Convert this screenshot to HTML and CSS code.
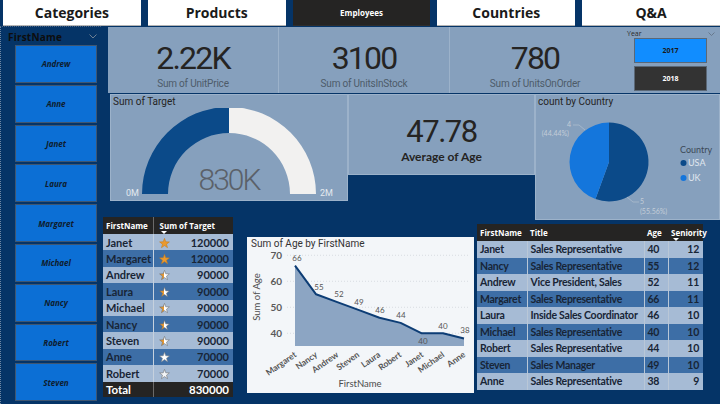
FILE: index.html
```html
<!DOCTYPE html>
<html>
<head>
<meta charset="utf-8">
<link rel="stylesheet" href="styles.css">
</head>
<body>
<svg class="defs" width="0" height="0">
  <defs>
    <linearGradient id="half" x1="0" x2="1" y1="0" y2="0">
      <stop offset="0.5" stop-color="#eb9a2e"/>
      <stop offset="0.5" stop-color="#ffffff"/>
    </linearGradient>
    <symbol id="star" viewBox="0 0 12 12">
      <polygon points="6,0.4 7.35,4.14 11.33,4.27 8.19,6.71 9.29,10.53 6,8.3 2.71,10.53 3.81,6.71 0.67,4.27 4.65,4.14"/>
    </symbol>
  </defs>
</svg>

<nav class="tabs">
  <div class="tab">Categories</div>
  <div class="tab">Products</div>
  <div class="tab active">Employees</div>
  <div class="tab">Countries</div>
  <div class="tab">Q&amp;A</div>
</nav>

<main class="canvas">
  <section class="slicer">
    <div class="slicer-head">
      <span>FirstName</span>
      <svg width="8" height="5" viewBox="0 0 8 5"><path d="M0.5 0.5 L4 4 L7.5 0.5" fill="none" stroke="#6d7f93" stroke-width="1"/></svg>
    </div>
    <div class="slicer-list">
      <div class="sbtn">Andrew</div>
      <div class="sbtn">Anne</div>
      <div class="sbtn">Janet</div>
      <div class="sbtn">Laura</div>
      <div class="sbtn">Margaret</div>
      <div class="sbtn">Michael</div>
      <div class="sbtn">Nancy</div>
      <div class="sbtn">Robert</div>
      <div class="sbtn">Steven</div>
    </div>
  </section>

  <section class="kpis">
    <div class="kpi"><div class="kpi-val">2.22K</div><div class="kpi-lbl">Sum of UnitPrice</div></div>
    <div class="kpi"><div class="kpi-val">3100</div><div class="kpi-lbl">Sum of UnitsInStock</div></div>
    <div class="kpi"><div class="kpi-val">780</div><div class="kpi-lbl">Sum of UnitsOnOrder</div></div>
    <div class="year">
      <div class="year-head">
        <span>Year</span>
        <svg width="7" height="4" viewBox="0 0 7 4"><path d="M0.5 0.5 L3.5 3.5 L6.5 0.5" fill="none" stroke="#5f6f80" stroke-width="0.8"/></svg>
      </div>
      <div class="yr on">2017</div>
      <div class="yr off">2018</div>
    </div>
  </section>

  <section class="gauge card">
    <div class="card-title">Sum of Target</div>
    <svg class="gauge-svg" width="236" height="93" viewBox="0 0 236 93">
      <path d="M31,86 A87,87 0 0 1 118,-1 L118,25 A61,61 0 0 0 57,86 Z" fill="#0b4a89"/>
      <path d="M118,-1 A87,87 0 0 1 205,86 L179,86 A61,61 0 0 0 118,25 Z" fill="#f2f1f0"/>
      <text x="118" y="82" class="g-val" text-anchor="middle">830K</text>
      <text x="15" y="88" class="g-min">0M</text>
      <text x="209" y="88" class="g-min">2M</text>
    </svg>
  </section>

  <section class="age card">
    <div class="age-val">47.78</div>
    <div class="age-lbl">Average of Age</div>
  </section>

  <section class="pie card">
    <div class="card-title">count by Country</div>
    <svg class="pie-svg" width="184" height="112" viewBox="0 0 184 112">
      <path d="M73,54 L73,14.5 A39.5,39.5 0 1 1 59.49,91.12 Z" fill="#0b4a89"/>
      <path d="M73,54 L59.49,91.12 A39.5,39.5 0 0 1 73,14.5 Z" fill="#1476dc"/>
      <polyline points="37,17 43,17 49,22" fill="none" stroke="#b9c6d4" stroke-width="0.6"/>
      <text x="35" y="19" class="p-lbl" text-anchor="end">4</text>
      <text x="33" y="28" class="p-lbl" text-anchor="end">(44.44%)</text>
      <polyline points="91,89 97,94 103,94" fill="none" stroke="#b9c6d4" stroke-width="0.6"/>
      <text x="104" y="96" class="p-lbl">5</text>
      <text x="104" y="106" class="p-lbl">(55.56%)</text>
      <text x="144" y="45" class="lg-title">Country</text>
      <circle cx="147.5" cy="55" r="3" fill="#0b4a89"/>
      <text x="152" y="58" class="lg-item">USA</text>
      <circle cx="147.5" cy="70" r="3" fill="#1476dc"/>
      <text x="152" y="73" class="lg-item">UK</text>
    </svg>
  </section>

  <section class="target">
    <table class="tt">
      <thead>
        <tr><th class="c-name">FirstName</th><th class="c-sum">Sum of Target<span class="sort"></span></th></tr>
      </thead>
      <tbody>
        <tr class="lt"><td>Janet</td><td class="num"><svg class="st" viewBox="0 0 12 12"><use href="#star" fill="#eb9a2e" stroke="#c77a1a" stroke-width="0.6"/></svg>120000</td></tr>
        <tr class="dk"><td>Margaret</td><td class="num"><svg class="st" viewBox="0 0 12 12"><use href="#star" fill="#eb9a2e" stroke="#c77a1a" stroke-width="0.6"/></svg>120000</td></tr>
        <tr class="lt"><td>Andrew</td><td class="num"><svg class="st" viewBox="0 0 12 12"><use href="#star" fill="url(#half)" stroke="#6b6b6b" stroke-width="0.6"/></svg>90000</td></tr>
        <tr class="dk"><td>Laura</td><td class="num"><svg class="st" viewBox="0 0 12 12"><use href="#star" fill="url(#half)" stroke="#6b6b6b" stroke-width="0.6"/></svg>90000</td></tr>
        <tr class="lt"><td>Michael</td><td class="num"><svg class="st" viewBox="0 0 12 12"><use href="#star" fill="url(#half)" stroke="#6b6b6b" stroke-width="0.6"/></svg>90000</td></tr>
        <tr class="dk"><td>Nancy</td><td class="num"><svg class="st" viewBox="0 0 12 12"><use href="#star" fill="url(#half)" stroke="#6b6b6b" stroke-width="0.6"/></svg>90000</td></tr>
        <tr class="lt"><td>Steven</td><td class="num"><svg class="st" viewBox="0 0 12 12"><use href="#star" fill="url(#half)" stroke="#6b6b6b" stroke-width="0.6"/></svg>90000</td></tr>
        <tr class="dk"><td>Anne</td><td class="num"><svg class="st" viewBox="0 0 12 12"><use href="#star" fill="#ffffff" stroke="#8a8a8a" stroke-width="0.6"/></svg>70000</td></tr>
        <tr class="lt"><td>Robert</td><td class="num"><svg class="st" viewBox="0 0 12 12"><use href="#star" fill="#f4f6f8" stroke="#6b6b6b" stroke-width="0.6"/></svg>70000</td></tr>
      </tbody>
      <tfoot>
        <tr><td>Total</td><td class="num">830000</td></tr>
      </tfoot>
    </table>
  </section>

  <section class="chart">
    <svg width="227" height="156" viewBox="0 0 227 156">
      <text x="4" y="9.5" class="ch-title">Sum of Age by FirstName</text>
      <g class="grid">
        <line x1="40" y1="18.3" x2="222" y2="18.3"/>
        <line x1="40" y1="44.3" x2="222" y2="44.3"/>
        <line x1="40" y1="70.3" x2="222" y2="70.3"/>
        <line x1="40" y1="96.3" x2="222" y2="96.3"/>
      </g>
      <g class="ax">
        <text x="35" y="22" text-anchor="end">70</text>
        <text x="35" y="48" text-anchor="end">60</text>
        <text x="35" y="74" text-anchor="end">50</text>
        <text x="35" y="100" text-anchor="end">40</text>
      </g>
      <text class="ax-title" transform="translate(13,60) rotate(-90)" text-anchor="middle">Sum of Age</text>
      <polygon points="48,28.7 69.1,57.3 90.3,65.1 111.4,72.9 132.5,80.7 153.6,85.9 174.8,96.3 195.9,96.3 217,101.5 217,109 48,109" fill="#8ca5c3"/>
      <polyline points="48,28.7 69.1,57.3 90.3,65.1 111.4,72.9 132.5,80.7 153.6,85.9 174.8,96.3 195.9,96.3 217,101.5" fill="none" stroke="#0d3d75" stroke-width="2" stroke-linejoin="round"/>
      <g class="dl">
        <text x="50" y="24" text-anchor="middle">66</text>
        <text x="72" y="53" text-anchor="middle">55</text>
        <text x="92" y="60" text-anchor="middle">52</text>
        <text x="112" y="68" text-anchor="middle">49</text>
        <text x="133" y="76" text-anchor="middle">46</text>
        <text x="154" y="81" text-anchor="middle">44</text>
        <text x="176" y="107" text-anchor="middle">40</text>
        <text x="196" y="92" text-anchor="middle">40</text>
        <text x="218" y="96" text-anchor="middle">38</text>
      </g>
      <g class="xl">
        <text transform="translate(50,119) rotate(-35)" text-anchor="end">Margaret</text>
        <text transform="translate(71,119) rotate(-35)" text-anchor="end">Nancy</text>
        <text transform="translate(92,119) rotate(-35)" text-anchor="end">Andrew</text>
        <text transform="translate(113,119) rotate(-35)" text-anchor="end">Steven</text>
        <text transform="translate(134,119) rotate(-35)" text-anchor="end">Laura</text>
        <text transform="translate(155,119) rotate(-35)" text-anchor="end">Robert</text>
        <text transform="translate(177,119) rotate(-35)" text-anchor="end">Janet</text>
        <text transform="translate(198,119) rotate(-35)" text-anchor="end">Michael</text>
        <text transform="translate(219,119) rotate(-35)" text-anchor="end">Anne</text>
      </g>
      <text x="113" y="150" class="ax-title" text-anchor="middle">FirstName</text>
    </svg>
  </section>

  <section class="emps">
    <table class="et">
      <thead>
        <tr><th class="e1">FirstName</th><th class="e2">Title</th><th class="e3">Age</th><th class="e4">Seniority<span class="sort"></span></th></tr>
      </thead>
      <tbody>
        <tr class="lt"><td>Janet</td><td>Sales Representative</td><td>40</td><td class="num">12</td></tr>
        <tr class="dk"><td>Nancy</td><td>Sales Representative</td><td>55</td><td class="num">12</td></tr>
        <tr class="lt"><td>Andrew</td><td>Vice President, Sales</td><td>52</td><td class="num">11</td></tr>
        <tr class="dk"><td>Margaret</td><td>Sales Representative</td><td>66</td><td class="num">11</td></tr>
        <tr class="lt"><td>Laura</td><td>Inside Sales Coordinator</td><td>46</td><td class="num">10</td></tr>
        <tr class="dk"><td>Michael</td><td>Sales Representative</td><td>40</td><td class="num">10</td></tr>
        <tr class="lt"><td>Robert</td><td>Sales Representative</td><td>44</td><td class="num">10</td></tr>
        <tr class="dk"><td>Steven</td><td>Sales Manager</td><td>49</td><td class="num">10</td></tr>
        <tr class="lt"><td>Anne</td><td>Sales Representative</td><td>38</td><td class="num">9</td></tr>
      </tbody>
    </table>
  </section>
</main>
</body>
</html>
```

FILE: styles.css
```css
* { box-sizing: border-box; margin: 0; padding: 0; }
html, body { width: 720px; height: 404px; overflow: hidden; }
body {
  background: #053467;
  font-family: Lato, "Open Sans", sans-serif;
  color: #1b2633;
}
.defs { position: absolute; width: 0; height: 0; }

/* ---------- tabs ---------- */
.tabs { display: flex; gap: 7px; padding-left: 3px; height: 26px; }
.tab {
  flex: 1;
  height: 26px;
  background: #ffffff;
  border-bottom: 1px solid #b4b4b4;
  display: flex; align-items: center; justify-content: center;
  font: 700 14px "Open Sans", sans-serif;
  color: #1a1a1a;
  padding-bottom: 1px;
}
.tab.active { background: #252423; color: #ffffff; font-size: 8px; border-bottom-color: #2e2d2c; }

/* ---------- canvas grid ---------- */
.canvas {
  display: grid;
  grid-template-columns: 101px 2px 5px 2px 123px 14px 101px 126px 3px 58px 168px 17px;
  grid-template-rows: 67px 1px 81px 26px 16px 3px 4px 13px 153px 3px 5px 6px;
  height: 378px;
}

/* ---------- slicer ---------- */
.slicer {
  grid-column: 1 / 2; grid-row: 1 / 13;
  border-left: 1px dotted #7188a2;
  border-top: 1px dotted #4c6585;
  display: flex; flex-direction: column;
  padding-top: 3px;
}
.slicer-head {
  height: 15px;
  display: flex; justify-content: space-between; align-items: center;
  padding: 0 4px 2px 7px;
  font: 700 10px "Open Sans", sans-serif;
  color: #0d0d0d;
  letter-spacing: 0.2px;
}
.slicer-list {
  display: grid;
  grid-template-rows: repeat(9, 37.8px);
  gap: 2px;
  padding-left: 14px;
  width: 96px;
}
.sbtn {
  background: #0c6fd5;
  border: 1px solid #3f5671;
  display: flex; align-items: center; justify-content: center;
  font: italic 700 8px "Open Sans", sans-serif;
  color: #0e1c2e;
}

/* ---------- KPI strip ---------- */
.kpis {
  grid-column: 4 / 13; grid-row: 1 / 2;
  margin-top: 1px;
  background: #86a0bd;
  display: flex;
}
.kpi {
  width: 171px;
  display: flex; flex-direction: column; align-items: center;
  padding-top: 15px;
}
.kpi:first-child { width: 170px; }
.kpi + .kpi { border-left: 1px solid #9cb2ca; }
.kpi-val {
  font: 400 32px/32px Roboto, sans-serif;
  letter-spacing: -1.8px;
  color: #252423;
}
.kpi-lbl {
  margin-top: 4px;
  font: 400 10px Roboto, sans-serif;
  color: #4d5b69;
  letter-spacing: -0.2px;
}
.year {
  flex: 1;
  padding: 2px 5px 0 7px;
  display: flex; flex-direction: column;
}
.year-head {
  height: 9px;
  display: flex; justify-content: space-between; align-items: center;
  font: 400 7px "Open Sans", sans-serif;
  color: #2b2b2b;
}
.yr {
  margin-left: 7px;
  width: 73px; height: 25px;
  display: flex; align-items: center; justify-content: center;
  font: 700 7px "Open Sans", sans-serif;
  border: 1px solid #5b6877;
}
.yr.on { background: #118dff; color: #1a1a1a; }
.yr.off { background: #333333; color: #ffffff; margin-top: 3px; }

/* ---------- cards ---------- */
.card {
  background: #86a0bd;
  border: 1px solid #9cb2ca;
}
.card-title {
  height: 13px;
  padding: 1px 0 0 2px;
  font: 400 10px Roboto, sans-serif;
  color: #252423;
}
.gauge { grid-column: 5 / 8; grid-row: 3 / 5; }
.gauge-svg { display: block; }
.g-val { font: 300 30px Roboto, sans-serif; fill: #5b6169; letter-spacing: -2px; }
.g-min { font: 400 9px Roboto, sans-serif; fill: #e3e9ef; }

.age {
  grid-column: 8 / 11; grid-row: 3 / 4;
  display: flex; flex-direction: column; align-items: center;
  padding-top: 21px;
}
.age-val {
  font: 400 31px/32px Roboto, sans-serif;
  letter-spacing: -1.5px;
  color: #252423;
}
.age-lbl {
  margin-top: 2px;
  font: 700 12px/14px Lato, sans-serif;
  color: #252423;
}

.pie { grid-column: 11 / 13; grid-row: 3 / 7; }
.pie-svg { display: block; }
.p-lbl { font: 400 7px Lato, sans-serif; fill: #c3cdd8; }
.lg-title { font: 400 9px Lato, sans-serif; fill: #3c4957; }
.lg-item { font: 400 9px Lato, sans-serif; fill: #e0e7ef; }

/* ---------- target table ---------- */
.target { grid-column: 3 / 6; grid-row: 6 / 12; }
.tt, .et {
  width: 100%;
  border-collapse: collapse;
  table-layout: fixed;
  font: 700 11px Lato, sans-serif;
  color: #182536;
}
.tt th, .et th {
  background: #252423;
  color: #ffffff;
  font: 700 8px "Open Sans", sans-serif;
  text-align: left;
  vertical-align: top;
  padding: 3px 0 0 3px;
  height: 17px;
}
.tt .c-name { width: 50px; }
.tt .c-sum { width: 80px; border-left: 1px solid #6b6a69; padding-left: 6px; }
.sort {
  display: block;
  width: 0; height: 0;
  border-left: 3px solid transparent;
  border-right: 3px solid transparent;
  border-top: 3px solid #ffffff;
  margin: 0 0 0 1px;
}
.tt td {
  height: 16.4px;
  padding: 0 3px;
  white-space: nowrap;
  overflow: hidden;
}
.tt td + td { border-left: 1px solid #c6d1de; }
.lt td { background: #a6bbd5; }
.dk td { background: #3d6ea6; }
.tt td.num { text-align: right; padding-right: 4px; }
.st { width: 11px; height: 11px; float: left; margin: 2px 0 0 2px; }
.tt tfoot td { background: #252423; color: #ffffff; font-size: 11.5px; height: 15px; }
.tt tfoot td + td { border-left: 1px solid #6b6a69; }

/* ---------- chart ---------- */
.chart {
  grid-column: 7 / 9; grid-row: 9 / 11;
  background: #f3f6f9;
}
.chart svg { display: block; }
.ch-title { font: 400 10px Roboto, sans-serif; fill: #333333; }
.grid line { stroke: #cdd3da; stroke-width: 0.7; stroke-dasharray: 1 2; }
.ax text { font: 700 10px Lato, sans-serif; fill: #5a5a5a; }
.ax-title { font: 400 9.5px Lato, sans-serif; fill: #4d4d4d; }
.dl text { font: 400 8px Lato, sans-serif; fill: #555555; }
.xl text { font: 700 8.5px Lato, sans-serif; fill: #555555; }

/* ---------- employees table ---------- */
.emps { grid-column: 10 / 12; grid-row: 8 / 10; }
.et { font-size: 10.5px; letter-spacing: -0.25px; }
.et .e1 { width: 50px; }
.et .e2 { width: 117px; }
.et .e3 { width: 24px; }
.et .e4 { width: 35px; }
.et th { letter-spacing: 0; }
.et td {
  height: 16.5px;
  padding: 0 2px 0 3px;
  white-space: nowrap;
  overflow: hidden;
}
.et td + td { border-left: 1px solid #b9c7d7; }
.et td.num { text-align: right; padding-right: 4px; }
.et .sort { margin-left: 2px; }
```
